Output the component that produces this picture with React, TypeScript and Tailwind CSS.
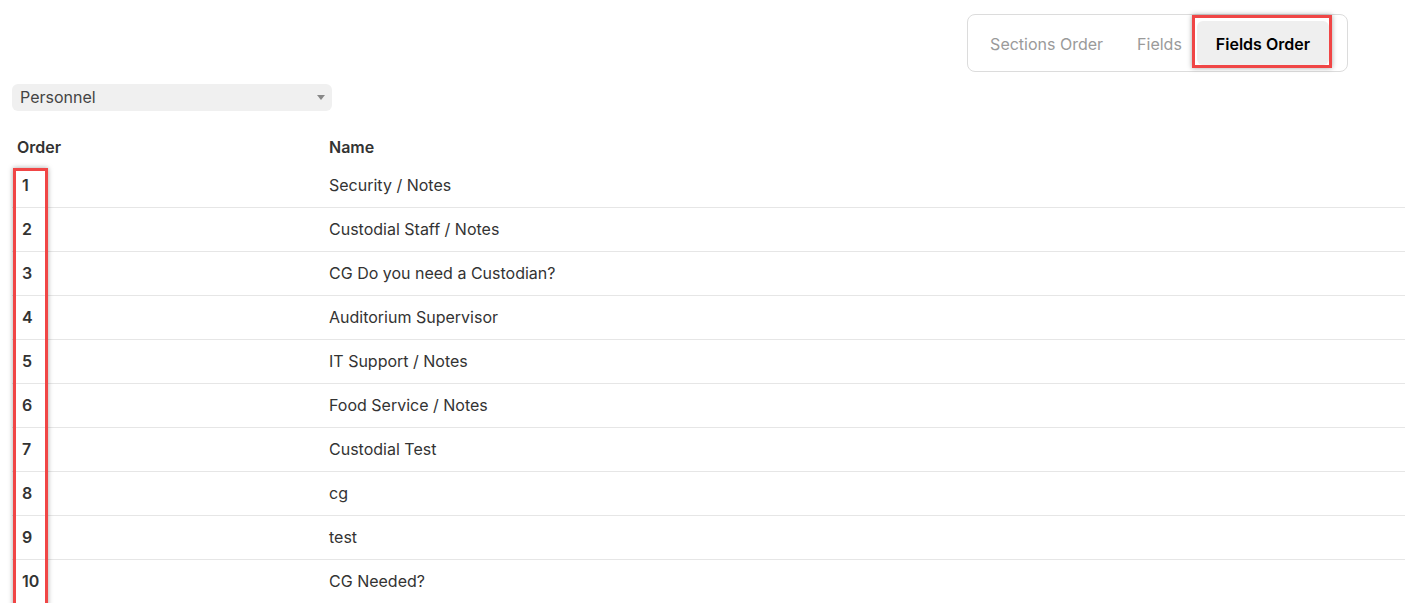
const rows = [
  "Security / Notes",
  "Custodial Staff / Notes",
  "CG Do you need a Custodian?",
  "Auditorium Supervisor",
  "IT Support / Notes",
  "Food Service / Notes",
  "Custodial Test",
  "cg",
  "test",
  "CG Needed?",
];

export default function App() {
  return (
    <div
      className="relative h-[603px] w-[1405px] overflow-hidden bg-white text-[#333]"
      style={{ fontFamily: "Inter, 'Noto Sans', sans-serif" }}
    >
      <div className="flex justify-end pr-[57px] pt-[14px]">
        <div className="flex h-[58px] items-center rounded-lg border border-[#dcdcdc] pr-[18px]">
          <div className="pl-[22px] pr-[17px] pt-[2px] text-[16px] text-[#9a9a9a]">Sections Order</div>
          <div className="pl-[17px] pr-[15px] pt-[2px] text-[16px] text-[#9a9a9a]">Fields</div>
          <div className="relative flex h-[44px] items-center rounded-md bg-[#efefef] px-[19px] pt-[1px] text-[16px] font-semibold text-black">
            Fields Order
            <div className="absolute -left-[5px] -right-[3px] -bottom-[3px] -top-[6px] border-[3px] border-[#f04646] shadow-[0_0_5px_rgba(0,0,0,0.35)]" />
          </div>
        </div>
      </div>

      <div className="ml-[12px] mt-[12px] flex h-[27px] w-[320px] items-center justify-between rounded-md bg-[#f0f0f0] pb-[1px] pl-[8px] pr-[7px] text-[16px] text-[#444]">
        <span>Personnel</span>
        <svg width="8" height="5" viewBox="0 0 8 5">
          <path d="M0 0h8L4 5z" fill="#888" />
        </svg>
      </div>

      <div className="relative ml-[12px] mt-[20px]">
        <div className="flex h-[33px] items-center pb-[1px] text-[16px] font-semibold text-[#333]">
          <div className="w-[317px] pl-[5px]">Order</div>
          <div>Name</div>
        </div>
        {rows.map((name, i) => (
          <div
            key={name}
            className="flex h-[44px] items-center border-b border-[#e6e6e6] pb-[2px] text-[16px]"
          >
            <div className="w-[317px] pl-[10px] font-semibold text-[#333]">{i + 1}</div>
            <div className="text-[#333]">{name}</div>
          </div>
        ))}
        <div className="absolute left-[1px] top-[37px] h-[440px] w-[35px] border-[3px] border-[#f04646] shadow-[0_0_5px_rgba(0,0,0,0.35)]" />
      </div>
    </div>
  );
}
